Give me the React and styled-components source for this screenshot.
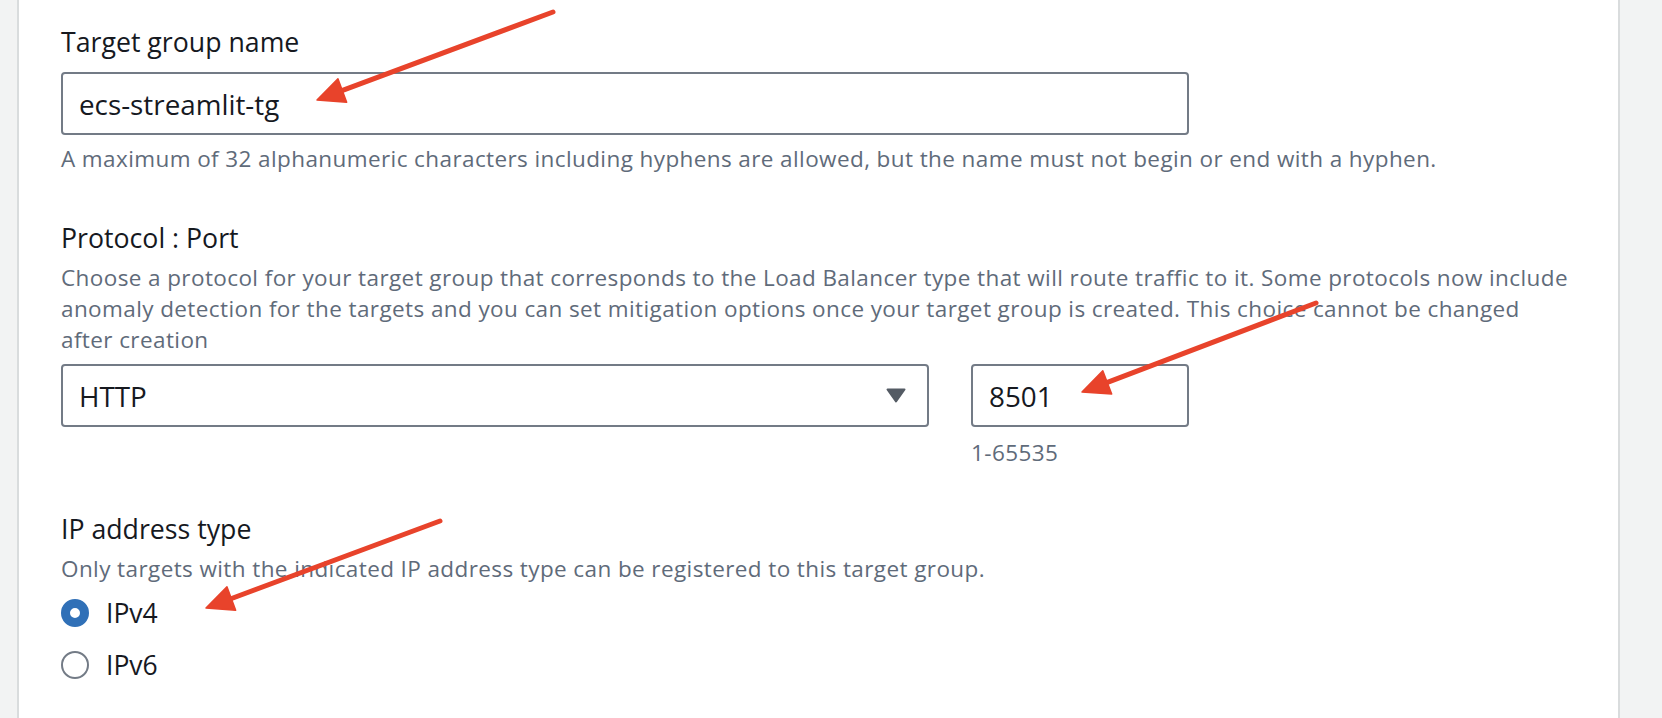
import React from 'react';
import styled, { createGlobalStyle } from 'styled-components';

const GlobalStyle = createGlobalStyle`
  html, body {
    margin: 0;
    padding: 0;
  }
  body {
    background: #f2f3f3;
    font-family: "Open Sans", "Noto Sans", sans-serif;
    color: #16191f;
  }
`;

const Page = styled.div`
  position: relative;
  width: 1662px;
  height: 718px;
  overflow: hidden;
  display: flex;
`;

const Panel = styled.main`
  margin-left: 17px;
  width: 1603px;
  box-sizing: border-box;
  background: #ffffff;
  border-left: 2px solid #d9dcdd;
  border-right: 2px solid #d9dcdd;
  padding: 25px 0 0 42px;
`;

const Field = styled.section`
  display: flex;
  flex-direction: column;
  align-items: flex-start;
  margin-top: ${(p) => p.$mt || 0}px;
`;

const Label = styled.div`
  font-size: 26.7px;
  line-height: 34px;
  color: #16191f;
`;

const Description = styled.div`
  margin-top: ${(p) => p.$mt || 0}px;
  font-size: 22.5px;
  letter-spacing: 0.4px;
  line-height: 31px;
  color: #5f6b7a;
  white-space: nowrap;
`;

const Controls = styled.div`
  margin-top: ${(p) => p.$mt || 0}px;
  display: flex;
  gap: 42px;
`;

const Box = styled.div`
  width: ${(p) => p.$w}px;
  height: 63px;
  box-sizing: border-box;
  border: 2px solid #737b86;
  border-radius: 4px;
  padding: 0 21px 0 16px;
  display: flex;
  align-items: center;
  justify-content: space-between;
  font-size: 27.8px;
  color: #16191f;
  background: #fff;
`;

const Column = styled.div`
  display: flex;
  flex-direction: column;
`;

const RadioGroup = styled.div`
  margin-top: 12px;
  display: flex;
  flex-direction: column;
  gap: 18px;
`;

const RadioRow = styled.label`
  display: flex;
  align-items: center;
  gap: 17px;
  font-size: 26.5px;
  line-height: 34px;
  color: #16191f;
`;

const RadioDot = styled.span`
  width: 28px;
  height: 28px;
  box-sizing: border-box;
  border-radius: 50%;
  background: #fff;
  border: ${(p) => (p.$checked ? '9px solid #3070b7' : '2px solid #737b86')};
`;

const Overlay = styled.svg`
  position: absolute;
  left: 0;
  top: 0;
  pointer-events: none;
`;

const arrows = [
  { from: [553, 12], to: [317, 100] },
  { from: [1316, 303], to: [1082, 392] },
  { from: [440, 521], to: [206, 608] },
];

function Arrow({ from, to }) {
  const dx = to[0] - from[0];
  const dy = to[1] - from[1];
  const len = Math.hypot(dx, dy);
  const ux = dx / len;
  const uy = dy / len;
  const headLen = 27;
  const half = 12.5;
  const bx = to[0] - ux * headLen;
  const by = to[1] - uy * headLen;
  const p1 = [bx - uy * half, by + ux * half];
  const p2 = [bx + uy * half, by - ux * half];
  return (
    <g>
      <line x1={from[0]} y1={from[1]} x2={bx + ux * 4} y2={by + uy * 4} stroke="#e8432b" strokeWidth="5" strokeLinecap="round" />
      <polygon points={`${to[0]},${to[1]} ${p1[0]},${p1[1]} ${p2[0]},${p2[1]}`} fill="#e8432b" stroke="#e8432b" strokeWidth="1.5" strokeLinejoin="round" />
    </g>
  );
}

function Caret() {
  return (
    <svg width="20" height="15" viewBox="0 0 20 15">
      <polygon points="1.5,1.5 18.5,1.5 10,13.5" fill="#545b64" stroke="#545b64" strokeWidth="2" strokeLinejoin="round" />
    </svg>
  );
}

export default function App() {
  return (
    <>
      <GlobalStyle />
      <Page>
        <Panel>
          <Field>
            <Label>Target group name</Label>
            <Controls $mt={13}>
              <Box $w={1128}>ecs-streamlit-tg</Box>
            </Controls>
            <Description $mt={8}>
              A maximum of 32 alphanumeric characters including hyphens are allowed, but the name must not begin or end with a hyphen.
            </Description>
          </Field>

          <Field $mt={47}>
            <Label>Protocol : Port</Label>
            <Description $mt={7}>
              Choose a protocol for your target group that corresponds to the Load Balancer type that will route traffic to it. Some protocols now include
              <br />
              anomaly detection for the targets and you can set mitigation options once your target group is created. This choice cannot be changed
              <br />
              after creation
            </Description>
            <Controls $mt={9}>
              <Box $w={868}>
                HTTP
                <Caret />
              </Box>
              <Column>
                <Box $w={218}>8501</Box>
                <Description $mt={10}>1-65535</Description>
              </Column>
            </Controls>
          </Field>

          <Field $mt={44}>
            <Label>IP address type</Label>
            <Description $mt={7}>
              Only targets with the indicated IP address type can be registered to this target group.
            </Description>
            <RadioGroup>
              <RadioRow>
                <RadioDot $checked />
                IPv4
              </RadioRow>
              <RadioRow>
                <RadioDot />
                IPv6
              </RadioRow>
            </RadioGroup>
          </Field>
        </Panel>

        <Overlay width="1662" height="718" viewBox="0 0 1662 718">
          {arrows.map((a, i) => (
            <Arrow key={i} from={a.from} to={a.to} />
          ))}
        </Overlay>
      </Page>
    </>
  );
}
